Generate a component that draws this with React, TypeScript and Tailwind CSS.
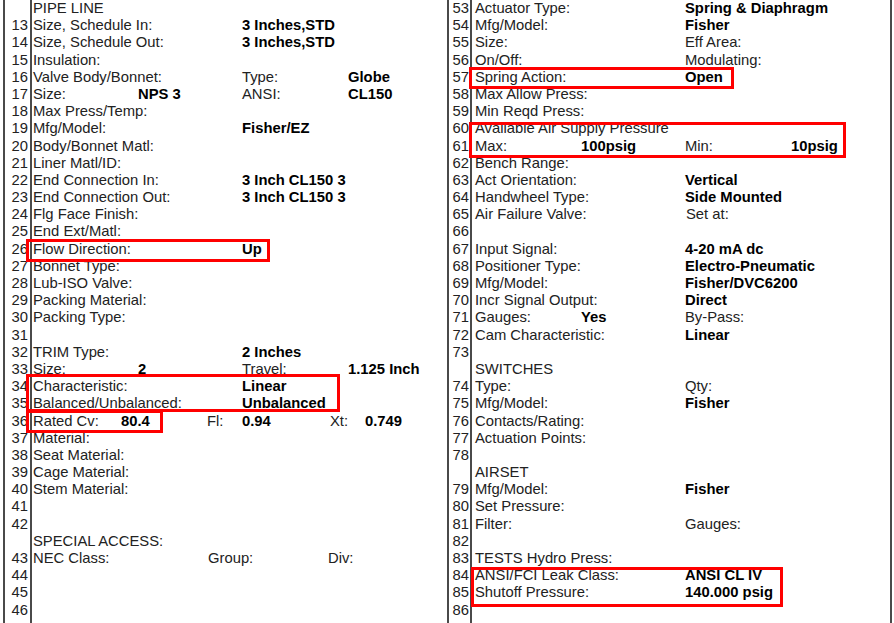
import React from "react";

type Cell = { t: string; w?: number; b?: boolean };
type RowDef = { n: string; cells: Cell[] };

const L = (t: string, w?: number): Cell => ({ t, w });
const B = (t: string, w?: number): Cell => ({ t, w, b: true });

const leftRows: RowDef[] = [
  { n: "", cells: [L("PIPE LINE")] },
  { n: "13", cells: [L("Size, Schedule In:", 209), B("3 Inches,STD")] },
  { n: "14", cells: [L("Size, Schedule Out:", 209), B("3 Inches,STD")] },
  { n: "15", cells: [L("Insulation:")] },
  { n: "16", cells: [L("Valve Body/Bonnet:", 209), L("Type:", 106), B("Globe")] },
  { n: "17", cells: [L("Size:", 105), B("NPS 3", 104), L("ANSI:", 106), B("CL150")] },
  { n: "18", cells: [L("Max Press/Temp:")] },
  { n: "19", cells: [L("Mfg/Model:", 209), B("Fisher/EZ")] },
  { n: "20", cells: [L("Body/Bonnet Matl:")] },
  { n: "21", cells: [L("Liner Matl/ID:")] },
  { n: "22", cells: [L("End Connection In:", 209), B("3 Inch CL150 3")] },
  { n: "23", cells: [L("End Connection Out:", 209), B("3 Inch CL150 3")] },
  { n: "24", cells: [L("Flg Face Finish:")] },
  { n: "25", cells: [L("End Ext/Matl:")] },
  { n: "26", cells: [L("Flow Direction:", 209), B("Up")] },
  { n: "27", cells: [L("Bonnet Type:")] },
  { n: "28", cells: [L("Lub-ISO Valve:")] },
  { n: "29", cells: [L("Packing Material:")] },
  { n: "30", cells: [L("Packing Type:")] },
  { n: "31", cells: [] },
  { n: "32", cells: [L("TRIM Type:", 209), B("2 Inches")] },
  { n: "33", cells: [L("Size:", 105), B("2", 104), L("Travel:", 106), B("1.125 Inch")] },
  { n: "34", cells: [L("Characteristic:", 209), B("Linear")] },
  { n: "35", cells: [L("Balanced/Unbalanced:", 209), B("Unbalanced")] },
  { n: "36", cells: [L("Rated Cv:", 88), B("80.4", 86), L("Fl:", 35), B("0.94", 88), L("Xt:", 35), B("0.749")] },
  { n: "37", cells: [L("Material:")] },
  { n: "38", cells: [L("Seat Material:")] },
  { n: "39", cells: [L("Cage Material:")] },
  { n: "40", cells: [L("Stem Material:")] },
  { n: "41", cells: [] },
  { n: "42", cells: [] },
  { n: "", cells: [L("SPECIAL ACCESS:")] },
  { n: "43", cells: [L("NEC Class:", 175), L("Group:", 120), L("Div:")] },
  { n: "44", cells: [] },
  { n: "45", cells: [] },
  { n: "46", cells: [] },
];

const rightRows: RowDef[] = [
  { n: "53", cells: [L("Actuator Type:", 210), B("Spring & Diaphragm")] },
  { n: "54", cells: [L("Mfg/Model:", 210), B("Fisher")] },
  { n: "55", cells: [L("Size:", 210), L("Eff Area:")] },
  { n: "56", cells: [L("On/Off:", 210), L("Modulating:")] },
  { n: "57", cells: [L("Spring Action:", 210), B("Open")] },
  { n: "58", cells: [L("Max Allow Press:")] },
  { n: "59", cells: [L("Min Reqd Press:")] },
  { n: "60", cells: [L("Available Air Supply Pressure")] },
  { n: "61", cells: [L("Max:", 106), B("100psig", 104), L("Min:", 106), B("10psig")] },
  { n: "62", cells: [L("Bench Range:")] },
  { n: "63", cells: [L("Act Orientation:", 210), B("Vertical")] },
  { n: "64", cells: [L("Handwheel Type:", 210), B("Side Mounted")] },
  { n: "65", cells: [L("Air Failure Valve:", 211), L("Set at:")] },
  { n: "66", cells: [] },
  { n: "67", cells: [L("Input Signal:", 210), B("4-20 mA dc")] },
  { n: "68", cells: [L("Positioner Type:", 210), B("Electro-Pneumatic")] },
  { n: "69", cells: [L("Mfg/Model:", 210), B("Fisher/DVC6200")] },
  { n: "70", cells: [L("Incr Signal Output:", 210), B("Direct")] },
  { n: "71", cells: [L("Gauges:", 106), B("Yes", 104), L("By-Pass:")] },
  { n: "72", cells: [L("Cam Characteristic:", 210), B("Linear")] },
  { n: "73", cells: [] },
  { n: "", cells: [L("SWITCHES")] },
  { n: "74", cells: [L("Type:", 210), L("Qty:")] },
  { n: "75", cells: [L("Mfg/Model:", 210), B("Fisher")] },
  { n: "76", cells: [L("Contacts/Rating:")] },
  { n: "77", cells: [L("Actuation Points:")] },
  { n: "78", cells: [] },
  { n: "", cells: [L("AIRSET")] },
  { n: "79", cells: [L("Mfg/Model:", 210), B("Fisher")] },
  { n: "80", cells: [L("Set Pressure:")] },
  { n: "81", cells: [L("Filter:", 210), L("Gauges:")] },
  { n: "82", cells: [] },
  { n: "83", cells: [L("TESTS Hydro Press:")] },
  { n: "84", cells: [L("ANSI/FCI Leak Class:", 210), B("ANSI CL IV")] },
  { n: "85", cells: [L("Shutoff Pressure:", 210), B("140.000 psig")] },
  { n: "86", cells: [] },
];

function Cells({ cells }: { cells: Cell[] }) {
  return (
    <>
      {cells.map((c, i) => (
        <span
          key={i}
          className={
            "shrink-0 whitespace-pre " +
            (c.b ? "font-bold text-black" : "text-[#222222]")
          }
          style={c.w ? { width: c.w } : undefined}
        >
          {c.t}
        </span>
      ))}
    </>
  );
}

function Panel({
  rows,
  numW,
  contentW,
  padL,
  leftBorder,
}: {
  rows: RowDef[];
  numW: string;
  contentW: string;
  padL: string;
  leftBorder: boolean;
}) {
  return (
    <div
      className={
        "flex h-[623px] shrink-0 border-r-2 border-[#4a4a4a] " +
        (leftBorder ? "border-l-2" : "")
      }
    >
      <div className={"flex flex-col shrink-0 border-r-2 border-[#4a4a4a] " + numW}>
        {rows.map((r, i) => (
          <div
            key={i}
            className="h-[17.2px] leading-[17.2px] text-right text-[#222222] shrink-0"
          >
            {r.n}
          </div>
        ))}
      </div>
      <div className={"flex flex-col shrink-0 " + contentW + " " + padL}>
        {rows.map((r, i) => (
          <div key={i} className="flex h-[17.2px] leading-[17.2px] shrink-0">
            <Cells cells={r.cells} />
          </div>
        ))}
      </div>
    </div>
  );
}

export default function App() {
  return (
    <div
      className="relative w-[894px] h-[623px] overflow-hidden bg-white pl-[3px] flex text-[14.8px]"
      style={{ fontFamily: '"Liberation Sans", Arial, sans-serif' }}
    >
      <Panel
        rows={leftRows}
        numW="w-[27px] pr-[2px]"
        contentW="w-[415px]"
        padL="pl-[1px]"
        leftBorder
      />
      <Panel
        rows={rightRows}
        numW="w-[23px] pr-[1px]"
        contentW="w-[418px]"
        padL="pl-[3px]"
        leftBorder={false}
      />
      {/* red annotation boxes */}
      <div className="absolute left-[26px] top-[239px] w-[244px] h-[23px] border-[3px] border-[#ff0000]" />
      <div className="absolute left-[26px] top-[374px] w-[314px] h-[38px] border-[3px] border-[#ff0000]" />
      <div className="absolute left-[26px] top-[410px] w-[137px] h-[23px] border-[3px] border-[#ff0000]" />
      <div className="absolute left-[469px] top-[67px] w-[265px] h-[22px] border-[3px] border-[#ff0000]" />
      <div className="absolute left-[469px] top-[122px] w-[377px] h-[36px] border-[3px] border-[#ff0000]" />
      <div className="absolute left-[471px] top-[567px] w-[312px] h-[40px] border-[3px] border-[#ff0000]" />
    </div>
  );
}
